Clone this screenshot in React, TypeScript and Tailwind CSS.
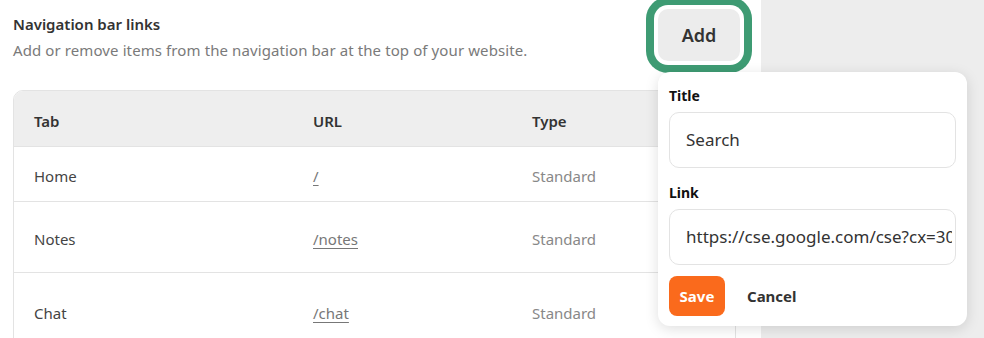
import React from "react";

const font = { fontFamily: '"Noto Sans", "Open Sans", sans-serif' };

const rows = [
  { tab: "Home", url: "/", type: "Standard", h: "h-[55px]" },
  { tab: "Notes", url: "/notes", type: "Standard", h: "h-[71px]" },
  { tab: "Chat", url: "/chat", type: "Standard", h: "h-[76px]" },
];

export default function App() {
  return (
    <div className="relative flex h-[338px] w-[984px] overflow-hidden bg-[#ededed]" style={font}>
      <div className="w-[761px] shrink-0 bg-white pl-[13px] pr-[25px]">
        <div className="flex items-start justify-between">
          <div className="pt-[13px]">
            <div className="text-[15px] font-semibold leading-[22px] text-[#333]">Navigation bar links</div>
            <div className="mt-[4px] text-[15px] leading-[22px] tracking-[0.1px] text-[#7a7a7a]">
              Add or remove items from the navigation bar at the top of your website.
            </div>
          </div>
          <button className="mr-[-4px] mt-[9px] flex h-[52px] w-[82px] items-center justify-center rounded-[10px] bg-[#ececec] text-[18px] font-semibold text-[#333] shadow-[0_0_0_4px_white,0_0_0_12px_#3e9b73]">
            Add
          </button>
        </div>
        <div className="mt-[29px] overflow-hidden rounded-t-[10px] border border-[#e3e3e3]">
          <div className="flex h-[56px] items-center border-b border-[#e3e3e3] bg-[#eeeeee] pt-[5px] text-[15px] font-semibold text-[#333]">
            <div className="w-[279px] pl-[20px]">Tab</div>
            <div className="w-[219px] pl-[20px]">URL</div>
            <div className="flex-1 pl-[20px]">Type</div>
          </div>
          {rows.map((r) => (
            <div key={r.tab} className={`flex items-center border-b border-[#e3e3e3] pt-[5px] text-[15px] ${r.h}`}>
              <div className="w-[279px] pl-[20px] text-[#444]">{r.tab}</div>
              <div className="w-[219px] pl-[20px]">
                <span className="text-[#777] underline underline-offset-[3px]">{r.url}</span>
              </div>
              <div className="flex-1 pl-[20px] text-[#888]">{r.type}</div>
            </div>
          ))}
        </div>
      </div>
      <div className="flex-1" />
      <div className="absolute left-[658px] top-[72px] w-[309px] rounded-[12px] bg-white px-[11px] pb-[10px] pt-[14px] shadow-[0_3px_14px_rgba(0,0,0,0.13)]">
        <div className="text-[14px] font-bold leading-[20px] text-[#111]">Title</div>
        <div className="mt-[6px] flex h-[56px] items-center rounded-[10px] border border-[#e3e3e3] px-[16px] text-[17px] text-[#333]">
          Search
        </div>
        <div className="mt-[15px] text-[14px] font-bold leading-[20px] text-[#111]">Link</div>
        <div className="mt-[6px] flex h-[56px] items-center rounded-[10px] border border-[#e3e3e3] pl-[16px] pr-[3px] text-[17px] text-[#333]">
          <div className="flex-1 overflow-hidden whitespace-nowrap">https://cse.google.com/cse?cx=3001</div>
        </div>
        <div className="mt-[11px] flex items-center">
          <button className="flex h-[40px] w-[56px] items-center justify-center rounded-[8px] bg-[#fa6a1c] text-[15px] font-bold text-white">
            Save
          </button>
          <button className="ml-[22px] text-[15px] font-bold text-[#333]">Cancel</button>
        </div>
      </div>
    </div>
  );
}
